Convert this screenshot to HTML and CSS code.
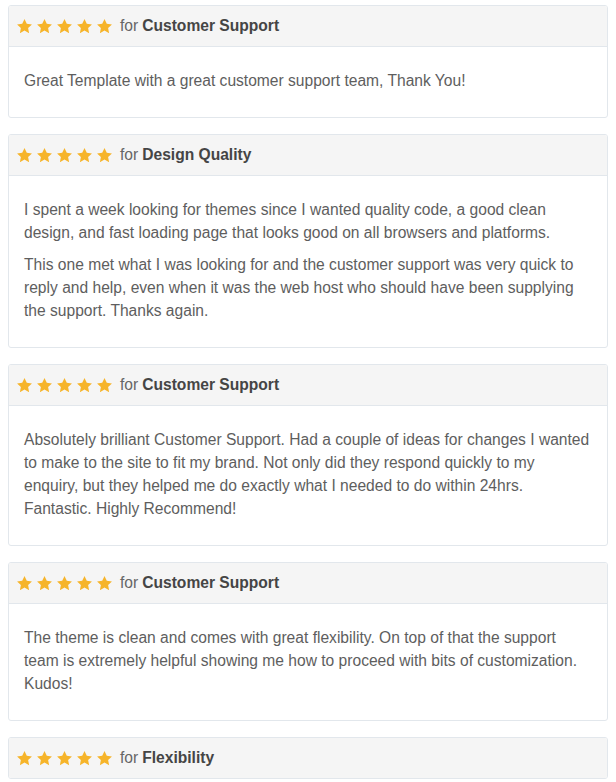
FILE: index.html
```html
<!DOCTYPE html>
<html lang="en">

<head>
    <meta charset="UTF-8">
    <meta name="viewport" content="width=device-width, initial-scale=1.0">
    <title>Reviews</title>
    <link rel="stylesheet" href="styles.css">
</head>

<body>
    <svg width="0" height="0" class="defs">
        <symbol id="star" viewBox="0 0 24 24">
            <polygon points="12,1.5 15.2,8.2 22.5,9.1 17.1,14.1 18.5,21.4 12,17.8 5.5,21.4 6.9,14.1 1.5,9.1 8.8,8.2" />
        </symbol>
    </svg>

    <div class="review">
        <div class="review-head">
            <span class="stars">
                <svg><use href="#star" /></svg><svg><use href="#star" /></svg><svg><use href="#star" /></svg><svg><use href="#star" /></svg><svg><use href="#star" /></svg>
            </span>
            for <b>Customer Support</b>
        </div>
        <div class="review-body">
            <p>Great Template with a great customer support team, Thank You!</p>
        </div>
    </div>

    <div class="review">
        <div class="review-head">
            <span class="stars">
                <svg><use href="#star" /></svg><svg><use href="#star" /></svg><svg><use href="#star" /></svg><svg><use href="#star" /></svg><svg><use href="#star" /></svg>
            </span>
            for <b>Design Quality</b>
        </div>
        <div class="review-body">
            <p>I spent a week looking for themes since I wanted quality code, a good clean design, and fast loading page that looks good on all browsers and platforms.</p>
            <p>This one met what I was looking for and the customer support was very quick to reply and help, even when it was the web host who should have been supplying the support. Thanks again.</p>
        </div>
    </div>

    <div class="review">
        <div class="review-head">
            <span class="stars">
                <svg><use href="#star" /></svg><svg><use href="#star" /></svg><svg><use href="#star" /></svg><svg><use href="#star" /></svg><svg><use href="#star" /></svg>
            </span>
            for <b>Customer Support</b>
        </div>
        <div class="review-body">
            <p>Absolutely brilliant Customer Support. Had a couple of ideas for changes I wanted to make to the site to fit my brand. Not only did they respond quickly to my enquiry, but they helped me do exactly what I needed to do within 24hrs. Fantastic. Highly Recommend!</p>
        </div>
    </div>

    <div class="review">
        <div class="review-head">
            <span class="stars">
                <svg><use href="#star" /></svg><svg><use href="#star" /></svg><svg><use href="#star" /></svg><svg><use href="#star" /></svg><svg><use href="#star" /></svg>
            </span>
            for <b>Customer Support</b>
        </div>
        <div class="review-body">
            <p>The theme is clean and comes with great flexibility. On top of that the support team is extremely helpful showing me how to proceed with bits of customization. Kudos!</p>
        </div>
    </div>

    <div class="review">
        <div class="review-head">
            <span class="stars">
                <svg><use href="#star" /></svg><svg><use href="#star" /></svg><svg><use href="#star" /></svg><svg><use href="#star" /></svg><svg><use href="#star" /></svg>
            </span>
            for <b>Flexibility</b>
        </div>
    </div>
</body>

</html>
```

FILE: styles.css
```css
* {
    box-sizing: border-box;
}

body {
    margin: 5px 8px;
    background-color: #ffffff;
    font-family: "Liberation Sans", Arial, sans-serif;
    font-size: 15.6px;
    color: #5e5e5e;
}

.defs {
    position: absolute;
}

.review {
    border: 1px solid #e2e7ec;
    border-radius: 3px;
    margin-bottom: 16px;
    overflow: hidden;
}

.review-head {
    display: flex;
    align-items: center;
    height: 40px;
    padding: 0 7px 1px;
    background-color: #f5f5f5;
    color: #666666;
    line-height: 23px;
}

.review-head b {
    margin-left: 4px;
    color: #454545;
}

.stars {
    display: flex;
    gap: 3px;
    margin-right: 7px;
    margin-top: 1px;
}

.stars svg {
    width: 17px;
    height: 17px;
    fill: #f6b42a;
}

.review-body {
    border-top: 1px solid #e2e7ec;
    padding: 22px 15px 16px;
}

.review-body p {
    margin: 0 0 9px;
    line-height: 23px;
}
```
